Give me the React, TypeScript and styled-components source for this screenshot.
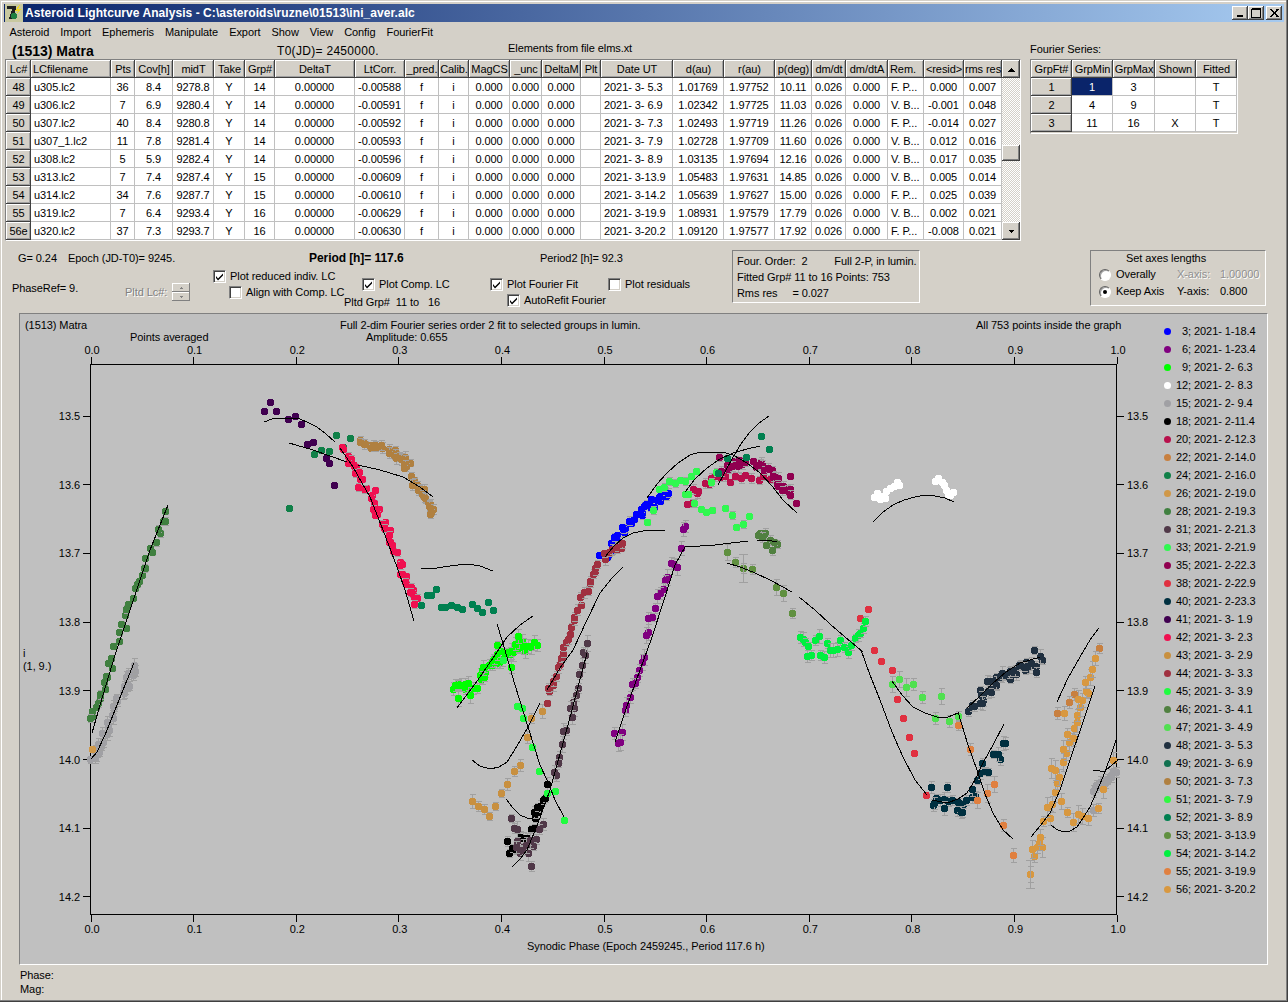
import React from 'react';
import styled, { createGlobalStyle } from 'styled-components';

const GlobalStyle = createGlobalStyle`
    html, body {
        margin: 0;
        padding: 0;
        background: #d4d0c8;
    }
    * {
        box-sizing: border-box;
    }
`;

const FACE = '#d4d0c8';
const UI_FONT = `'Liberation Sans', Arial, sans-serif`;

const Window = styled.div`
    width: 1288px;
    height: 1002px;
    overflow: hidden;
    background: ${FACE};
    font: 11px ${UI_FONT};
    letter-spacing: -0.07px;
    color: #000;
    box-shadow: inset -1px -1px #404040, inset -2px -2px #808080, inset 1px 1px ${FACE}, inset 2px 2px #fff;
    padding-top: 4px;
`;

const TitleBar = styled.div`
    height: 18px;
    margin: 0 4px;
    display: flex;
    align-items: center;
    background: linear-gradient(90deg, #0a246a, #a6caf0);
    color: #fff;
    font-weight: bold;
    font-size: 12px;
    letter-spacing: 0.06px;
    padding-left: 1px;
`;

const TitleText = styled.span`
    margin-left: 2px;
    flex: 1;
`;

const WinButtons = styled.div`
    display: flex;
    margin-right: 2px;
`;

const WinButton = styled.div<{ $gap?: boolean }>`
    width: 16px;
    height: 14px;
    background: ${FACE};
    margin-left: ${(p) => (p.$gap ? 2 : 0)}px;
    box-shadow: inset -1px -1px #404040, inset 1px 1px #fff, inset -2px -2px #808080;
    display: flex;
    align-items: center;
    justify-content: center;
`;

const MenuBar = styled.div`
    height: 20px;
    display: flex;
    align-items: center;
    padding-left: 4px;
`;

const MenuItem = styled.span`
    padding: 0 5.5px;
`;

const TopArea = styled.div`
    display: flex;
    height: 199px;
`;

const LeftTop = styled.div`
    width: 1030px;
    padding-left: 5px;
`;

const InfoRow = styled.div`
    height: 17px;
    display: flex;
    align-items: center;
`;

const AsteroidName = styled.span`
    font-weight: bold;
    font-size: 14px;
    letter-spacing: 0;
    width: 272px;
    padding-left: 7px;
`;

const EpochText = styled.span`
    font-size: 12px;
    letter-spacing: 0.3px;
    width: 231px;
`;

const ElementsText = styled.span`
    position: relative;
    top: -3px;
`;

const TableFrame = styled.div`
    display: flex;
    width: 1016px;
    height: 182px;
    border: 1px solid;
    border-color: #808080 #fff #fff #808080;
`;

const Grid = styled.table`
    border-collapse: separate;
    border-spacing: 0;
    table-layout: fixed;
    font: 11px ${UI_FONT};
    letter-spacing: -0.07px;
`;

const Col = styled.col<{ $w: number }>`
    width: ${(p) => p.$w}px;
`;

const HeadCell = styled.th<{ $left?: boolean }>`
    height: 18px;
    padding: 0 0 0 ${(p) => (p.$left ? 2 : 0)}px;
    background: ${FACE};
    font-weight: normal;
    text-align: ${(p) => (p.$left ? 'left' : 'center')};
    white-space: pre;
    overflow: hidden;
    box-shadow: inset -1px -1px #404040, inset 1px 1px #fff, inset -2px -2px #a0a0a0;
`;

const Cell = styled.td<{ $left?: boolean; $selected?: boolean }>`
    height: 18px;
    padding: 0 0 0 ${(p) => (p.$left ? 3 : 0)}px;
    background: ${(p) => (p.$selected ? '#0a246a' : '#fff')};
    color: ${(p) => (p.$selected ? '#fff' : '#000')};
    text-align: ${(p) => (p.$left ? 'left' : 'center')};
    white-space: pre;
    overflow: hidden;
    border-right: 1px solid #c0c0c0;
    border-bottom: 1px solid #c0c0c0;
`;

const ScrollTrack = styled.div`
    width: 18px;
    display: flex;
    flex-direction: column;
    background-color: #fff;
    background-image: conic-gradient(${FACE} 25%, #fff 25% 50%, ${FACE} 50% 75%, #fff 75%);
    background-size: 2px 2px;
`;

const ScrollButton = styled.div`
    width: 18px;
    height: 18px;
    flex: none;
    background: ${FACE};
    box-shadow: inset -1px -1px #404040, inset 1px 1px #fff, inset -2px -2px #808080;
    display: flex;
    align-items: center;
    justify-content: center;
`;

const ScrollThumb = styled(ScrollButton)`
    height: 16px;
    margin-top: 67px;
    margin-bottom: auto;
`;

const RightTop = styled.div`
    width: 210px;
`;

const FourierLabel = styled.div`
    height: 17px;
    padding-top: 1px;
    line-height: 13px;
`;

const FourierFrame = styled.div`
    width: 208px;
    height: 75px;
    border: 1px solid;
    border-color: #808080 #fff #fff #808080;
`;

const ControlsArea = styled.div`
    height: 72px;
    display: flex;
`;

const ControlsLeft = styled.div`
    width: 732px;
    padding-top: 9px;
`;

const ReadoutRow = styled.div`
    height: 15px;
    display: flex;
    align-items: center;
`;

const Readout = styled.span<{ $w: number; $bold?: boolean }>`
    width: ${(p) => p.$w}px;
    font-weight: ${(p) => (p.$bold ? 'bold' : 'normal')};
    font-size: ${(p) => (p.$bold ? 12 : 11)}px;
    white-space: pre;
`;

const OptionsRow = styled.div`
    display: flex;
`;

const OptionColumn = styled.div<{ $w: number; $top: number }>`
    width: ${(p) => p.$w}px;
    padding-top: ${(p) => p.$top}px;
    display: flex;
    flex-direction: column;
`;

const Option = styled.label<{ $indent?: number; $height?: number }>`
    display: flex;
    align-items: center;
    gap: 4px;
    height: ${(p) => p.$height ?? 16}px;
    margin-left: ${(p) => p.$indent ?? 0}px;
    white-space: pre;
`;

const CheckBox = styled.span`
    width: 13px;
    height: 13px;
    flex: none;
    background: #fff;
    border: 1px solid;
    border-color: #808080 #fff #fff #808080;
    box-shadow: inset 1px 1px #404040, inset -1px -1px ${FACE};
    display: flex;
    align-items: center;
    justify-content: center;
`;

const PlainText = styled.div<{ $left?: number; $top?: number; $muted?: boolean }>`
    margin-left: ${(p) => p.$left ?? 0}px;
    margin-top: ${(p) => p.$top ?? 0}px;
    white-space: pre;
    color: ${(p) => (p.$muted ? '#808080' : '#000')};
    text-shadow: ${(p) => (p.$muted ? '1px 1px #fff' : 'none')};
`;

const SpinGroup = styled.div`
    display: flex;
    align-items: center;
    gap: 5px;
`;

const Spinner = styled.div`
    width: 18px;
    height: 18px;
    display: flex;
    flex-direction: column;
`;

const SpinPart = styled.div`
    flex: 1;
    background: ${FACE};
    box-shadow: inset -1px -1px #808080, inset 1px 1px #fff;
    display: flex;
    align-items: center;
    justify-content: center;
`;

const SummaryBox = styled.div`
    width: 188px;
    height: 53px;
    margin-top: 9px;
    padding: 2px 0 0 4px;
    border: 1px solid;
    border-color: #808080 #fff #fff #808080;
    display: flex;
    flex-direction: column;
    line-height: 16px;
    white-space: pre;
`;

const AxesBox = styled.div`
    width: 176px;
    height: 56px;
    margin: 9px 0 0 170px;
    border: 1px solid;
    border-color: #808080 #fff #fff #808080;
    display: flex;
    flex-direction: column;
    line-height: 15px;
`;

const AxesTitle = styled.div`
    text-align: center;
    margin-right: 24px;
`;

const AxesRow = styled.div`
    display: flex;
    align-items: center;
    height: 17px;
    padding-left: 8px;
`;

const Radio = styled.span<{ $on?: boolean }>`
    width: 12px;
    height: 12px;
    border-radius: 50%;
    background: #fff;
    border: 1px solid;
    border-color: #606060 #fff #fff #606060;
    box-shadow: inset 1px 1px #a0a0a0;
    margin-right: 5px;
    flex: none;
    display: flex;
    align-items: center;
    justify-content: center;
    &::after {
        content: '';
        width: 4px;
        height: 4px;
        border-radius: 50%;
        background: ${(p) => (p.$on ? '#000' : 'transparent')};
    }
`;

const AxesName = styled.span`
    width: 61px;
`;

const AxesValue = styled.span<{ $muted?: boolean }>`
    width: 43px;
    color: ${(p) => (p.$muted ? '#909090' : '#000')};
    text-shadow: ${(p) => (p.$muted ? '1px 1px #fff' : 'none')};
`;

const PlotPanel = styled.div`
    width: 1249px;
    height: 652px;
    margin-left: 19px;
    background: #c0c0c0;
    border: 1px solid;
    border-color: #808080 #fff #fff #808080;
    display: flex;
`;

const Chart = styled.svg`
    width: 1135px;
    height: 650px;
    flex: none;
    display: block;
`;

const ChartLabel = styled.text`
    font: 11px ${UI_FONT};
    fill: #000;
`;

const Legend = styled.ul`
    list-style: none;
    margin: 0;
    padding: 8px 0 0 9px;
    display: flex;
    flex-direction: column;
`;

const LegendRow = styled.li`
    height: 18px;
    display: flex;
    align-items: center;
    white-space: pre;
`;

const LegendDot = styled.span<{ $color: string }>`
    width: 7px;
    height: 7px;
    border-radius: 50%;
    background: ${(p) => p.$color};
    flex: none;
`;

const LegendNum = styled.span`
    width: 20px;
    text-align: right;
    margin-right: 3px;
`;

const StatusArea = styled.div`
    padding: 3px 0 0 20px;
    line-height: 14px;
`;

const colWidths = [25, 80, 24, 38, 41, 31, 30, 80, 50, 34, 30, 41, 32, 39, 20, 72, 51, 51, 37, 34, 42, 36, 40, 38];
const headers = ['Lc#', 'LCfilename', 'Pts', 'Cov[h]', 'midT', 'Take', 'Grp#', 'DeltaT', 'LtCorr.', '_pred.', 'Calib.', 'MagCS', '_unc', 'DeltaM', 'Plt', 'Date UT', 'd(au)', 'r(au)', 'p(deg)', 'dm/dt', 'dm/dtA', 'Rem.', '<resid>', 'rms res'];

const rows: string[][] = [
    ['48', 'u305.lc2', '36', '8.4', '9278.8', '14', '-0.00588', ' 3- 5.3', '1.01769', '1.97752', '10.11', 'F. P...', '0.000', '0.007'],
    ['49', 'u306.lc2', '7', '6.9', '9280.4', '14', '-0.00591', ' 3- 6.9', '1.02342', '1.97725', '11.03', 'V. B...', '-0.001', '0.048'],
    ['50', 'u307.lc2', '40', '8.4', '9280.8', '14', '-0.00592', ' 3- 7.3', '1.02493', '1.97719', '11.26', 'F. P...', '-0.014', '0.027'],
    ['51', 'u307_1.lc2', '11', '7.8', '9281.4', '14', '-0.00593', ' 3- 7.9', '1.02728', '1.97709', '11.60', 'V. B...', '0.012', '0.016'],
    ['52', 'u308.lc2', '5', '5.9', '9282.4', '14', '-0.00596', ' 3- 8.9', '1.03135', '1.97694', '12.16', 'V. B...', '0.017', '0.035'],
    ['53', 'u313.lc2', '7', '7.4', '9287.4', '15', '-0.00609', ' 3-13.9', '1.05483', '1.97631', '14.85', 'V. B...', '0.005', '0.014'],
    ['54', 'u314.lc2', '34', '7.6', '9287.7', '15', '-0.00610', ' 3-14.2', '1.05639', '1.97627', '15.00', 'F. P...', '0.025', '0.039'],
    ['55', 'u319.lc2', '7', '6.4', '9293.4', '16', '-0.00629', ' 3-19.9', '1.08931', '1.97579', '17.79', 'V. B...', '0.002', '0.021'],
    ['56e', 'u320.lc2', '37', '7.3', '9293.7', '16', '-0.00630', ' 3-20.2', '1.09120', '1.97577', '17.92', 'F. P...', '-0.008', '0.021'],
];

const fourierWidths = [41, 41, 42, 41, 41];
const fourierHeaders = ['GrpFt#', 'GrpMin', 'GrpMax', 'Shown', 'Fitted'];
const fourierRows = [
    ['1', '1', '3', '', 'T'],
    ['2', '4', '9', '', 'T'],
    ['3', '11', '16', 'X', 'T'],
];

type Pt = [number, number];

// small seeded generator so the scatter is the same on every load
function seeded(seed: number) {
    let s = seed;
    return () => {
        s = (s * 16807) % 2147483647;
        return s / 2147483647;
    };
}

function along(path: Pt[], count: number, jitter: number, seed: number): Pt[] {
    const rnd = seeded(seed * 7919 + 11);
    const out: Pt[] = [];
    for (let i = 0; i < count; i++) {
        const t = (i / Math.max(count - 1, 1)) * (path.length - 1);
        const k = Math.min(Math.floor(t), path.length - 2);
        const f = t - k;
        const x = path[k][0] + (path[k + 1][0] - path[k][0]) * f;
        const y = path[k][1] + (path[k + 1][1] - path[k][1]) * f;
        out.push([x + (rnd() - 0.5) * jitter * 2, y + (rnd() - 0.5) * jitter * 2]);
    }
    return out;
}

interface Group {
    label: string;
    date: string;
    color: string;
    pts: Pt[];
    err?: number;
}

const groups: Group[] = [
    { label: '3', date: '2021- 1-18.4', color: '#0000ff', err: 3, pts: along([[603, 558], [611, 552], [617, 537], [627, 525], [640, 512], [650, 505], [660, 497], [665, 493]], 42, 4, 1) },
    { label: '6', date: '2021- 1-23.4', color: '#800080', err: 6, pts: [[685, 526], [683, 529], [681, 548], [671, 563], [674, 564], [677, 567], [667, 577], [665, 580], [663, 589], [660, 593], [657, 596], [655, 608], [652, 617], [648, 618], [648, 632], [646, 635], [644, 657], [642, 662], [639, 670], [637, 677], [635, 683], [632, 684], [630, 697], [625, 710], [626, 705], [622, 732], [614, 733], [618, 743], [620, 742]] },
    { label: '9', date: '2021- 2- 6.3', color: '#00ff00', err: 6, pts: [...along([[457, 690], [475, 680], [490, 665], [505, 652], [518, 645], [533, 645]], 48, 6.5, 3), [457, 685], [458, 698], [470, 695], [518, 636], [511, 667], [497, 645]] },
    { label: '12', date: '2021- 2- 8.3', color: '#ffffff', err: 0, pts: [[874, 497], [877, 493], [882, 496], [886, 491], [890, 488], [894, 486], [897, 482], [899, 485], [885, 498], [880, 499], [935, 481], [938, 478], [942, 482], [946, 490], [950, 495], [953, 492], [948, 494], [944, 485]] },
    { label: '15', date: '2021- 2- 9.4', color: '#a0a0a4', err: 5, pts: [...along([[92, 762], [100, 745], [110, 720], [120, 695], [128, 680], [135, 668]], 34, 3, 4), ...along([[1094, 790], [1100, 785], [1108, 778], [1118, 771]], 16, 3, 5), [1093, 810]] },
    { label: '18', date: '2021- 2-11.4', color: '#000000', err: 5, pts: [[507, 841], [509, 853], [512, 848], [515, 849], [520, 837], [523, 838], [527, 838], [531, 829], [534, 828], [535, 818], [534, 812], [538, 812], [537, 807], [540, 806], [543, 800], [545, 798], [547, 784]] },
    { label: '20', date: '2021- 2-12.3', color: '#b8104c', err: 4, pts: [[687, 504], [692, 503], [697, 493], [693, 489], [698, 491], [705, 483], [709, 484], [711, 478], [715, 476], [720, 477], [725, 476], [730, 482], [735, 476], [741, 478], [745, 475], [751, 478], [759, 480], [763, 476], [770, 479], [777, 480]] },
    { label: '22', date: '2021- 2-14.0', color: '#c88040', err: 5, pts: [[1057, 713], [1099, 648], [1074, 694], [1069, 702]] },
    { label: '24', date: '2021- 2-16.0', color: '#108048', err: 0, pts: [[289, 508], [314, 454], [321, 450], [329, 451], [336, 435], [350, 438], [343, 447]] },
    { label: '26', date: '2021- 2-19.0', color: '#d09848', err: 0, pts: [[92, 749]] },
    { label: '28', date: '2021- 2-19.3', color: '#408040', err: 3, pts: [...along([[93, 717], [105, 680], [120, 635], [135, 590], [150, 555], [168, 512]], 36, 3.5, 6), [96, 707], [90, 718]] },
    { label: '31', date: '2021- 2-21.3', color: '#503848', err: 6, pts: [[587, 643], [583, 652], [585, 655], [582, 665], [579, 674], [578, 688], [576, 695], [573, 702], [570, 708], [574, 708], [572, 717], [566, 730], [563, 731], [562, 744], [559, 757], [558, 763], [556, 775], [554, 772], [511, 818], [514, 828], [517, 829], [543, 824], [539, 829], [536, 839], [517, 841], [523, 847], [533, 846], [520, 853], [528, 853], [531, 866], [522, 850], [526, 845], [530, 840], [516, 847]] },
    { label: '33', date: '2021- 2-21.9', color: '#30f850', err: 3, pts: [[647, 522], [653, 510], [659, 489], [664, 487], [669, 481], [675, 483], [680, 480], [685, 481], [691, 476], [696, 471], [685, 494], [688, 494], [694, 503], [701, 509], [706, 512], [712, 510], [725, 508], [732, 515], [736, 527], [743, 524], [749, 516], [711, 482], [716, 472]] },
    { label: '35', date: '2021- 2-22.3', color: '#900050', err: 4, pts: [...along([[722, 467], [735, 463], [747, 465], [762, 463], [773, 473], [782, 484], [793, 494]], 34, 4, 7), [719, 457], [790, 476], [796, 503], [769, 469]] },
    { label: '38', date: '2021- 2-22.9', color: '#e03040', err: 0, pts: [[868, 609], [860, 618], [874, 650], [881, 661], [892, 670], [897, 699], [903, 718], [909, 737], [914, 753], [926, 795]] },
    { label: '40', date: '2021- 2-23.3', color: '#003040', err: 5, pts: [[931, 787], [947, 787], [933, 805], [936, 798], [940, 800], [944, 799], [948, 801], [952, 800], [944, 808], [957, 810], [959, 806], [962, 812], [963, 804], [966, 800], [972, 797], [975, 796], [972, 789], [977, 780], [980, 773], [985, 771], [988, 772], [982, 763], [993, 754], [1000, 759], [998, 754], [1003, 743], [1005, 743], [958, 802], [961, 812], [934, 803]] },
    { label: '41', date: '2021- 3- 1.9', color: '#400050', err: 0, pts: [[270, 402], [264, 411], [276, 411], [288, 419], [295, 416], [301, 424], [307, 444], [313, 442], [326, 458], [329, 463], [334, 485]] },
    { label: '42', date: '2021- 3- 2.3', color: '#f01050', err: 3, pts: [...along([[342, 446], [352, 463], [362, 476], [370, 500], [380, 515], [390, 535], [397, 555], [403, 575], [410, 590], [414, 598]], 46, 3.5, 8), [358, 487], [375, 490], [414, 604]] },
    { label: '43', date: '2021- 3- 2.9', color: '#c89040', err: 5, pts: [[542, 711], [531, 718], [527, 737], [520, 765], [514, 771], [507, 784], [501, 793], [472, 801], [478, 806], [484, 809], [489, 816], [495, 806]] },
    { label: '44', date: '2021- 3- 3.3', color: '#a03040', err: 4, pts: [...along([[549, 692], [555, 675], [560, 657], [568, 640], [575, 620], [583, 597], [593, 578], [600, 560], [613, 550], [623, 543]], 36, 3, 9), [547, 703]] },
    { label: '45', date: '2021- 3- 3.9', color: '#20fc40', err: 0, pts: [[517, 706], [522, 708], [523, 718], [532, 747], [539, 771], [547, 793], [555, 791], [564, 820], [503, 660]] },
    { label: '46', date: '2021- 3- 4.1', color: '#508040', err: 4, pts: [[758, 535], [760, 533], [763, 535], [765, 533], [762, 537], [770, 540], [777, 544], [772, 550], [766, 545], [774, 542]] },
    { label: '47', date: '2021- 3- 4.9', color: '#50e050', err: 7, pts: [[892, 684], [899, 679], [906, 687], [913, 684], [922, 697], [941, 696], [935, 718], [949, 721], [958, 716]] },
    { label: '48', date: '2021- 3- 5.3', color: '#203040', err: 5, pts: [...along([[967, 707], [980, 697], [988, 686], [996, 680], [1005, 676], [1015, 668], [1025, 664], [1038, 664]], 34, 5, 10), [1040, 656], [1034, 650], [1036, 672], [982, 703]] },
    { label: '49', date: '2021- 3- 6.9', color: '#107050', err: 0, pts: [] },
    { label: '50', date: '2021- 3- 7.3', color: '#b08040', err: 4, pts: [...along([[359, 440], [368, 445], [380, 446], [392, 452], [400, 457], [408, 460], [405, 470]], 32, 3, 11), ...along([[410, 477], [415, 485], [422, 490], [425, 500], [431, 505], [431, 514]], 18, 2.5, 12)] },
    { label: '51', date: '2021- 3- 7.9', color: '#30f840', err: 0, pts: [] },
    { label: '52', date: '2021- 3- 8.9', color: '#008050', err: 0, pts: [[421, 605], [427, 595], [431, 595], [436, 589], [441, 607], [445, 607], [451, 605], [457, 607], [462, 609], [472, 604], [477, 608], [482, 612], [488, 602], [493, 610], [761, 436], [769, 449], [746, 457], [727, 458], [718, 473]] },
    { label: '53', date: '2021- 3-13.9', color: '#609040', err: 7, pts: [[727, 552], [735, 562], [743, 568], [752, 569], [776, 587], [783, 593], [792, 613]] },
    { label: '54', date: '2021- 3-14.2', color: '#00f040', err: 5, pts: [[800, 637], [803, 639], [805, 642], [808, 646], [807, 656], [811, 655], [815, 640], [819, 636], [820, 655], [824, 657], [827, 643], [830, 650], [833, 650], [837, 649], [840, 640], [844, 647], [848, 652], [851, 645], [855, 638], [858, 635], [860, 633], [863, 628], [865, 621]] },
    { label: '55', date: '2021- 3-19.9', color: '#e08040', err: 7, pts: [[958, 725], [970, 749], [994, 784], [987, 793], [977, 800], [1003, 825], [1013, 855]] },
    { label: '56', date: '2021- 3-20.2', color: '#d89840', err: 7, pts: [[1030, 874], [1034, 856], [1032, 849], [1037, 847], [1042, 847], [1039, 843], [1040, 837], [1043, 821], [1050, 818], [1047, 807], [1052, 804], [1055, 792], [1057, 783], [1059, 777], [1051, 768], [1055, 770], [1063, 762], [1066, 753], [1063, 749], [1069, 742], [1073, 738], [1067, 734], [1074, 728], [1077, 722], [1077, 715], [1080, 707], [1082, 700], [1078, 699], [1088, 693], [1086, 691], [1085, 682], [1090, 677], [1092, 669], [1095, 658], [1061, 801], [1067, 812], [1073, 822], [1078, 814], [1082, 816], [1088, 818], [1098, 808], [1103, 789], [1113, 760], [1064, 713]] },
];

const curves: Pt[][] = [
    [[92, 733], [100, 705], [115, 655], [130, 610], [150, 550], [168, 505]],
    [[91, 759], [97, 752], [105, 735], [115, 710], [125, 685], [134, 663]],
    [[264, 422], [272, 419], [280, 418], [290, 418], [300, 419], [309, 423], [317, 427], [326, 434], [335, 442]],
    [[289, 443], [313, 450], [330, 456], [347, 462]],
    [[340, 448], [353, 467], [362, 483], [370, 497], [383, 530], [397, 567], [405, 590], [414, 621]],
    [[358, 465], [380, 470], [403, 477], [420, 487], [433, 497]],
    [[421, 568], [437, 568], [450, 566], [467, 564], [480, 566], [493, 571]],
    [[457, 708], [480, 677], [495, 655], [507, 637], [520, 625], [533, 616]],
    [[497, 624], [502, 640], [515, 685], [528, 727], [540, 765], [547, 780], [555, 800], [564, 817]],
    [[547, 690], [560, 668], [573, 650], [587, 620], [600, 593], [612, 578], [623, 567]],
    [[605, 557], [614, 546], [623, 538], [633, 533], [643, 531], [655, 530], [665, 531]],
    [[647, 498], [657, 484], [667, 473], [678, 463], [690, 455], [700, 452], [710, 452], [722, 452], [733, 455], [747, 463], [760, 473], [772, 486], [783, 500], [797, 513]],
    [[685, 492], [695, 479], [707, 468], [720, 459], [733, 453], [747, 449], [760, 446]],
    [[718, 485], [725, 472], [733, 457], [741, 444], [750, 432], [759, 423], [769, 416]],
    [[615, 742], [625, 712], [640, 670], [651, 640], [665, 597], [675, 565], [685, 547], [715, 545], [748, 541]],
    [[757, 540], [767, 540], [777, 542]],
    [[727, 563], [740, 567], [753, 572], [772, 581], [792, 592]],
    [[799, 597], [815, 610], [830, 624], [845, 637], [863, 652]],
    [[861, 650], [870, 675], [880, 700], [892, 732], [903, 757], [915, 780], [927, 795]],
    [[892, 681], [902, 695], [913, 707], [925, 713], [937, 717], [948, 717], [958, 713]],
    [[958, 712], [968, 745], [977, 770], [985, 794], [993, 813], [1003, 830], [1013, 839]],
    [[932, 800], [947, 803], [958, 799], [967, 793], [975, 780], [983, 763], [993, 745], [1004, 724]],
    [[967, 708], [980, 696], [993, 683], [1006, 672], [1020, 663], [1040, 657]],
    [[1031, 837], [1040, 826], [1050, 813], [1060, 790], [1070, 760], [1083, 722], [1095, 686]],
    [[1057, 702], [1068, 678], [1080, 657], [1090, 640], [1099, 628]],
    [[1051, 825], [1056, 829], [1063, 832], [1070, 831], [1077, 827], [1083, 818], [1090, 807], [1103, 777], [1110, 758], [1117, 737]],
    [[1093, 770], [1100, 771], [1105, 771], [1112, 765], [1118, 760]],
    [[873, 522], [883, 512], [893, 505], [904, 500], [915, 497], [925, 495], [935, 496], [945, 498], [954, 502]],
    [[472, 760], [480, 766], [490, 769], [499, 767], [507, 762], [517, 746], [528, 727], [540, 703]],
    [[506, 799], [513, 808], [520, 815], [527, 818], [533, 818], [543, 808]],
    [[512, 867], [520, 859], [527, 850], [537, 826], [550, 790], [568, 725], [587, 653]],
];

const xTicks = Array.from({ length: 11 }, (_, i) => ({ x: 91 + i * 102.6, label: (i / 10).toFixed(1) }));
const yTicks = ['13.5', '13.6', '13.7', '13.8', '13.9', '14.0', '14.1', '14.2'].map((label, i) => ({ y: 416 + i * 68.7, label }));

function toPoints(c: Pt[]) {
    return c.map((p) => p.join(',')).join(' ');
}

function CheckMark() {
    return (
        <svg width="9" height="9" viewBox="0 0 9 9">
            <path d="M1 4 L3 6.5 L8 1.5 L8 3.5 L3 8.5 L1 6 Z" fill="#000" />
        </svg>
    );
}

function Check({ on, label, indent, height }: { on: boolean; label: string; indent?: number; height?: number }) {
    return (
        <Option $indent={indent} $height={height}>
            <CheckBox>{on && <CheckMark />}</CheckBox>
            {label}
        </Option>
    );
}

function AppIcon() {
    return (
        <svg width="18" height="18" viewBox="0 0 18 18" shapeRendering="crispEdges">
            <rect width="18" height="18" fill="#c8c8a0" />
            <path d="M2 2 H11 V5 L8 15 H4 L7 5 H2 Z" fill="#202020" />
            <path d="M14 1 L10 7 H13 L11 11 L16 5 H13 L15 1 Z" fill="#f0d820" />
            <circle cx="9" cy="12" r="3" fill="#208040" />
        </svg>
    );
}

function Arrow({ up, color = '#000', size = 7 }: { up?: boolean; color?: string; size?: number }) {
    return (
        <svg width={size} height={Math.ceil(size / 2) + 1} viewBox="0 0 7 4" shapeRendering="crispEdges">
            <path d={up ? 'M3.5 0 L7 4 H0 Z' : 'M0 0 H7 L3.5 4 Z'} fill={color} />
        </svg>
    );
}

function PlotChart() {
    const rnd = seeded(4242);
    return (
        <Chart viewBox="20 314 1135 650">
            <g shapeRendering="crispEdges" stroke="#000" fill="none">
                <rect x="90.5" y="364.5" width="1026" height="550" />
                {xTicks.map((t) => (
                    <g key={t.label}>
                        <line x1={t.x} x2={t.x} y1={357} y2={364} />
                        <line x1={t.x} x2={t.x} y1={915} y2={922} />
                    </g>
                ))}
                {yTicks.map((t) => (
                    <g key={t.label}>
                        <line x1={83} x2={90} y1={t.y} y2={t.y} />
                        <line x1={1117} x2={1124} y1={t.y} y2={t.y} />
                    </g>
                ))}
            </g>
            {groups.map((g) => (
                <g key={g.label} shapeRendering="crispEdges">
                    {g.pts.map(([x, y], i) => {
                        const e = g.err ? g.err * (0.7 + rnd() * 0.7) : 0;
                        const bx = Math.round(x) + 0.5;
                        const top = Math.round(y - e) + 0.5;
                        const bottom = Math.round(y + e) + 0.5;
                        return (
                            <g key={i}>
                                {e > 0 && (
                                    <path
                                        d={`M${bx - 3} ${top}H${bx + 3}M${bx} ${top}V${bottom}M${bx - 3} ${bottom}H${bx + 3}`}
                                        stroke="#a0a0a0"
                                        fill="none"
                                    />
                                )}
                                <circle cx={bx} cy={Math.round(y) + 0.5} r={3.9} fill={g.color} />
                            </g>
                        );
                    })}
                </g>
            ))}
            {/* single points with the long error bars near phase 0.64 and 0.92 */}
            <path d="M743.5 554V582M739 554H748M739 582H748M1030.5 860V888M1026 860H1035M1026 888H1035" stroke="#a0a0a0" fill="none" shapeRendering="crispEdges" />
            <g shapeRendering="crispEdges" fill="none" stroke="#000">
                {curves.map((c, i) => (
                    <polyline key={i} points={toPoints(c)} />
                ))}
            </g>
            <ChartLabel x="25" y="329">(1513) Matra</ChartLabel>
            <ChartLabel x="130" y="341">Points averaged</ChartLabel>
            <ChartLabel x="340" y="329">Full 2-dim Fourier series order 2 fit to selected groups in lumin.</ChartLabel>
            <ChartLabel x="366" y="341">Amplitude: 0.655</ChartLabel>
            <ChartLabel x="976" y="329">All 753 points inside the graph</ChartLabel>
            {xTicks.map((t) => (
                <g key={t.label}>
                    <ChartLabel x={t.x + 1} y="354" textAnchor="middle">{t.label}</ChartLabel>
                    <ChartLabel x={t.x + 1} y="933" textAnchor="middle">{t.label}</ChartLabel>
                </g>
            ))}
            {yTicks.map((t) => (
                <g key={t.label}>
                    <ChartLabel x="80" y={t.y + 4} textAnchor="end">{t.label}</ChartLabel>
                    <ChartLabel x="1127" y={t.y + 4}>{t.label}</ChartLabel>
                </g>
            ))}
            <ChartLabel x="23" y="657">i</ChartLabel>
            <ChartLabel x="23" y="670">(1, 9.)</ChartLabel>
            <ChartLabel x="527" y="950">Synodic Phase (Epoch 2459245., Period 117.6 h)</ChartLabel>
        </Chart>
    );
}

export default function App() {
    return (
        <Window>
            <GlobalStyle />
            <TitleBar>
                <AppIcon />
                <TitleText>Asteroid Lightcurve Analysis - C:\asteroids\ruzne\01513\ini_aver.alc</TitleText>
                <WinButtons>
                    <WinButton>
                        <svg width="8" height="8" viewBox="0 0 8 8" shapeRendering="crispEdges"><path d="M1 6H7V8H1Z" fill="#000" /></svg>
                    </WinButton>
                    <WinButton>
                        <svg width="10" height="10" viewBox="0 0 10 10" shapeRendering="crispEdges"><path d="M0.5 1.5H9.5V9.5H0.5ZM0.5 0.5H9.5" fill="none" stroke="#000" /></svg>
                    </WinButton>
                    <WinButton $gap>
                        <svg width="9" height="8" viewBox="0 0 9 8" shapeRendering="crispEdges"><path d="M1 0L8 8M8 0L1 8" fill="none" stroke="#000" strokeWidth="1.6" /></svg>
                    </WinButton>
                </WinButtons>
            </TitleBar>
            <MenuBar>
                {['Asteroid', 'Import', 'Ephemeris', 'Manipulate', 'Export', 'Show', 'View', 'Config', 'FourierFit'].map((m) => (
                    <MenuItem key={m}>{m}</MenuItem>
                ))}
            </MenuBar>
            <TopArea>
                <LeftTop>
                    <InfoRow>
                        <AsteroidName>(1513) Matra</AsteroidName>
                        <EpochText>T0(JD)= 2450000.</EpochText>
                        <ElementsText>Elements from file elms.xt</ElementsText>
                    </InfoRow>
                    <TableFrame>
                        <Grid>
                            <colgroup>
                                {colWidths.map((w, i) => (
                                    <Col key={i} $w={w} />
                                ))}
                            </colgroup>
                            <thead>
                                <tr>
                                    {headers.map((h) => (
                                        <HeadCell key={h} $left={h === 'LCfilename' || h === 'Rem.'}>{h}</HeadCell>
                                    ))}
                                </tr>
                            </thead>
                            <tbody>
                                {rows.map((r) => (
                                    <tr key={r[0]}>
                                        <HeadCell as="td">{r[0]}</HeadCell>
                                        <Cell $left>{r[1]}</Cell>
                                        <Cell>{r[2]}</Cell>
                                        <Cell>{r[3]}</Cell>
                                        <Cell>{r[4]}</Cell>
                                        <Cell>Y</Cell>
                                        <Cell>{r[5]}</Cell>
                                        <Cell>0.00000</Cell>
                                        <Cell>{r[6]}</Cell>
                                        <Cell>f</Cell>
                                        <Cell>i</Cell>
                                        <Cell>0.000</Cell>
                                        <Cell>0.000</Cell>
                                        <Cell>0.000</Cell>
                                        <Cell />
                                        <Cell $left>{'2021-' + r[7]}</Cell>
                                        <Cell>{r[8]}</Cell>
                                        <Cell>{r[9]}</Cell>
                                        <Cell>{r[10]}</Cell>
                                        <Cell>0.026</Cell>
                                        <Cell>0.000</Cell>
                                        <Cell $left>{r[11]}</Cell>
                                        <Cell>{r[12]}</Cell>
                                        <Cell>{r[13]}</Cell>
                                    </tr>
                                ))}
                            </tbody>
                        </Grid>
                        <ScrollTrack>
                            <ScrollButton><Arrow up /></ScrollButton>
                            <ScrollThumb />
                            <ScrollButton><Arrow /></ScrollButton>
                        </ScrollTrack>
                    </TableFrame>
                </LeftTop>
                <RightTop>
                    <FourierLabel>Fourier Series:</FourierLabel>
                    <FourierFrame>
                        <Grid>
                            <colgroup>
                                {fourierWidths.map((w, i) => (
                                    <Col key={i} $w={w} />
                                ))}
                            </colgroup>
                            <thead>
                                <tr>
                                    {fourierHeaders.map((h) => (
                                        <HeadCell key={h}>{h}</HeadCell>
                                    ))}
                                </tr>
                            </thead>
                            <tbody>
                                {fourierRows.map((r) => (
                                    <tr key={r[0]}>
                                        <HeadCell as="td">{r[0]}</HeadCell>
                                        <Cell $selected={r[0] === '1'}>{r[1]}</Cell>
                                        <Cell>{r[2]}</Cell>
                                        <Cell>{r[3]}</Cell>
                                        <Cell>{r[4]}</Cell>
                                    </tr>
                                ))}
                            </tbody>
                        </Grid>
                    </FourierFrame>
                </RightTop>
            </TopArea>
            <ControlsArea>
                <ControlsLeft>
                    <ReadoutRow>
                        <Readout $w={18} />
                        <Readout $w={50}>G= 0.24</Readout>
                        <Readout $w={241}>Epoch (JD-T0)= 9245.</Readout>
                        <Readout $w={231} $bold>Period [h]= 117.6</Readout>
                        <Readout $w={120}>Period2 [h]= 92.3</Readout>
                    </ReadoutRow>
                    <OptionsRow>
                        <OptionColumn $w={125} $top={17}>
                            <PlainText $left={12}>PhaseRef= 9.</PlainText>
                        </OptionColumn>
                        <OptionColumn $w={88} $top={18}>
                            <SpinGroup>
                                <PlainText $muted>Pltd Lc#:</PlainText>
                                <Spinner>
                                    <SpinPart><Arrow up color="#808080" size={5} /></SpinPart>
                                    <SpinPart><Arrow color="#808080" size={5} /></SpinPart>
                                </Spinner>
                            </SpinGroup>
                        </OptionColumn>
                        <OptionColumn $w={131} $top={3}>
                            <Check on label="Plot reduced indiv. LC" />
                            <Check on={false} label="Align with Comp. LC" indent={16} />
                        </OptionColumn>
                        <OptionColumn $w={146} $top={11}>
                            <Check on label="Plot Comp. LC" indent={18} />
                            <PlainText $top={4}>Pltd Grp#  11 to   16</PlainText>
                        </OptionColumn>
                        <OptionColumn $w={118} $top={11}>
                            <Check on label="Plot Fourier Fit" />
                            <Check on label="AutoRefit Fourier" indent={17} />
                        </OptionColumn>
                        <OptionColumn $w={110} $top={11}>
                            <Check on={false} label="Plot residuals" />
                        </OptionColumn>
                    </OptionsRow>
                </ControlsLeft>
                <SummaryBox>
                    <span>Four. Order:  2         Full 2-P, in lumin.</span>
                    <span>Fitted Grp# 11 to 16 Points: 753</span>
                    <span>Rms res     = 0.027</span>
                </SummaryBox>
                <AxesBox>
                    <AxesTitle>Set axes lengths</AxesTitle>
                    <AxesRow>
                        <Radio />
                        <AxesName>Overally</AxesName>
                        <AxesValue $muted>X-axis:</AxesValue>
                        <AxesValue $muted>1.00000</AxesValue>
                    </AxesRow>
                    <AxesRow>
                        <Radio $on />
                        <AxesName>Keep Axis</AxesName>
                        <AxesValue>Y-axis:</AxesValue>
                        <AxesValue>0.800</AxesValue>
                    </AxesRow>
                </AxesBox>
            </ControlsArea>
            <PlotPanel>
                <PlotChart />
                <Legend>
                    {groups.map((g) => (
                        <LegendRow key={g.label}>
                            <LegendDot $color={g.color} />
                            <LegendNum>{g.label};</LegendNum>
                            {g.date}
                        </LegendRow>
                    ))}
                </Legend>
            </PlotPanel>
            <StatusArea>
                <div>Phase:</div>
                <div>Mag:</div>
            </StatusArea>
        </Window>
    );
}
